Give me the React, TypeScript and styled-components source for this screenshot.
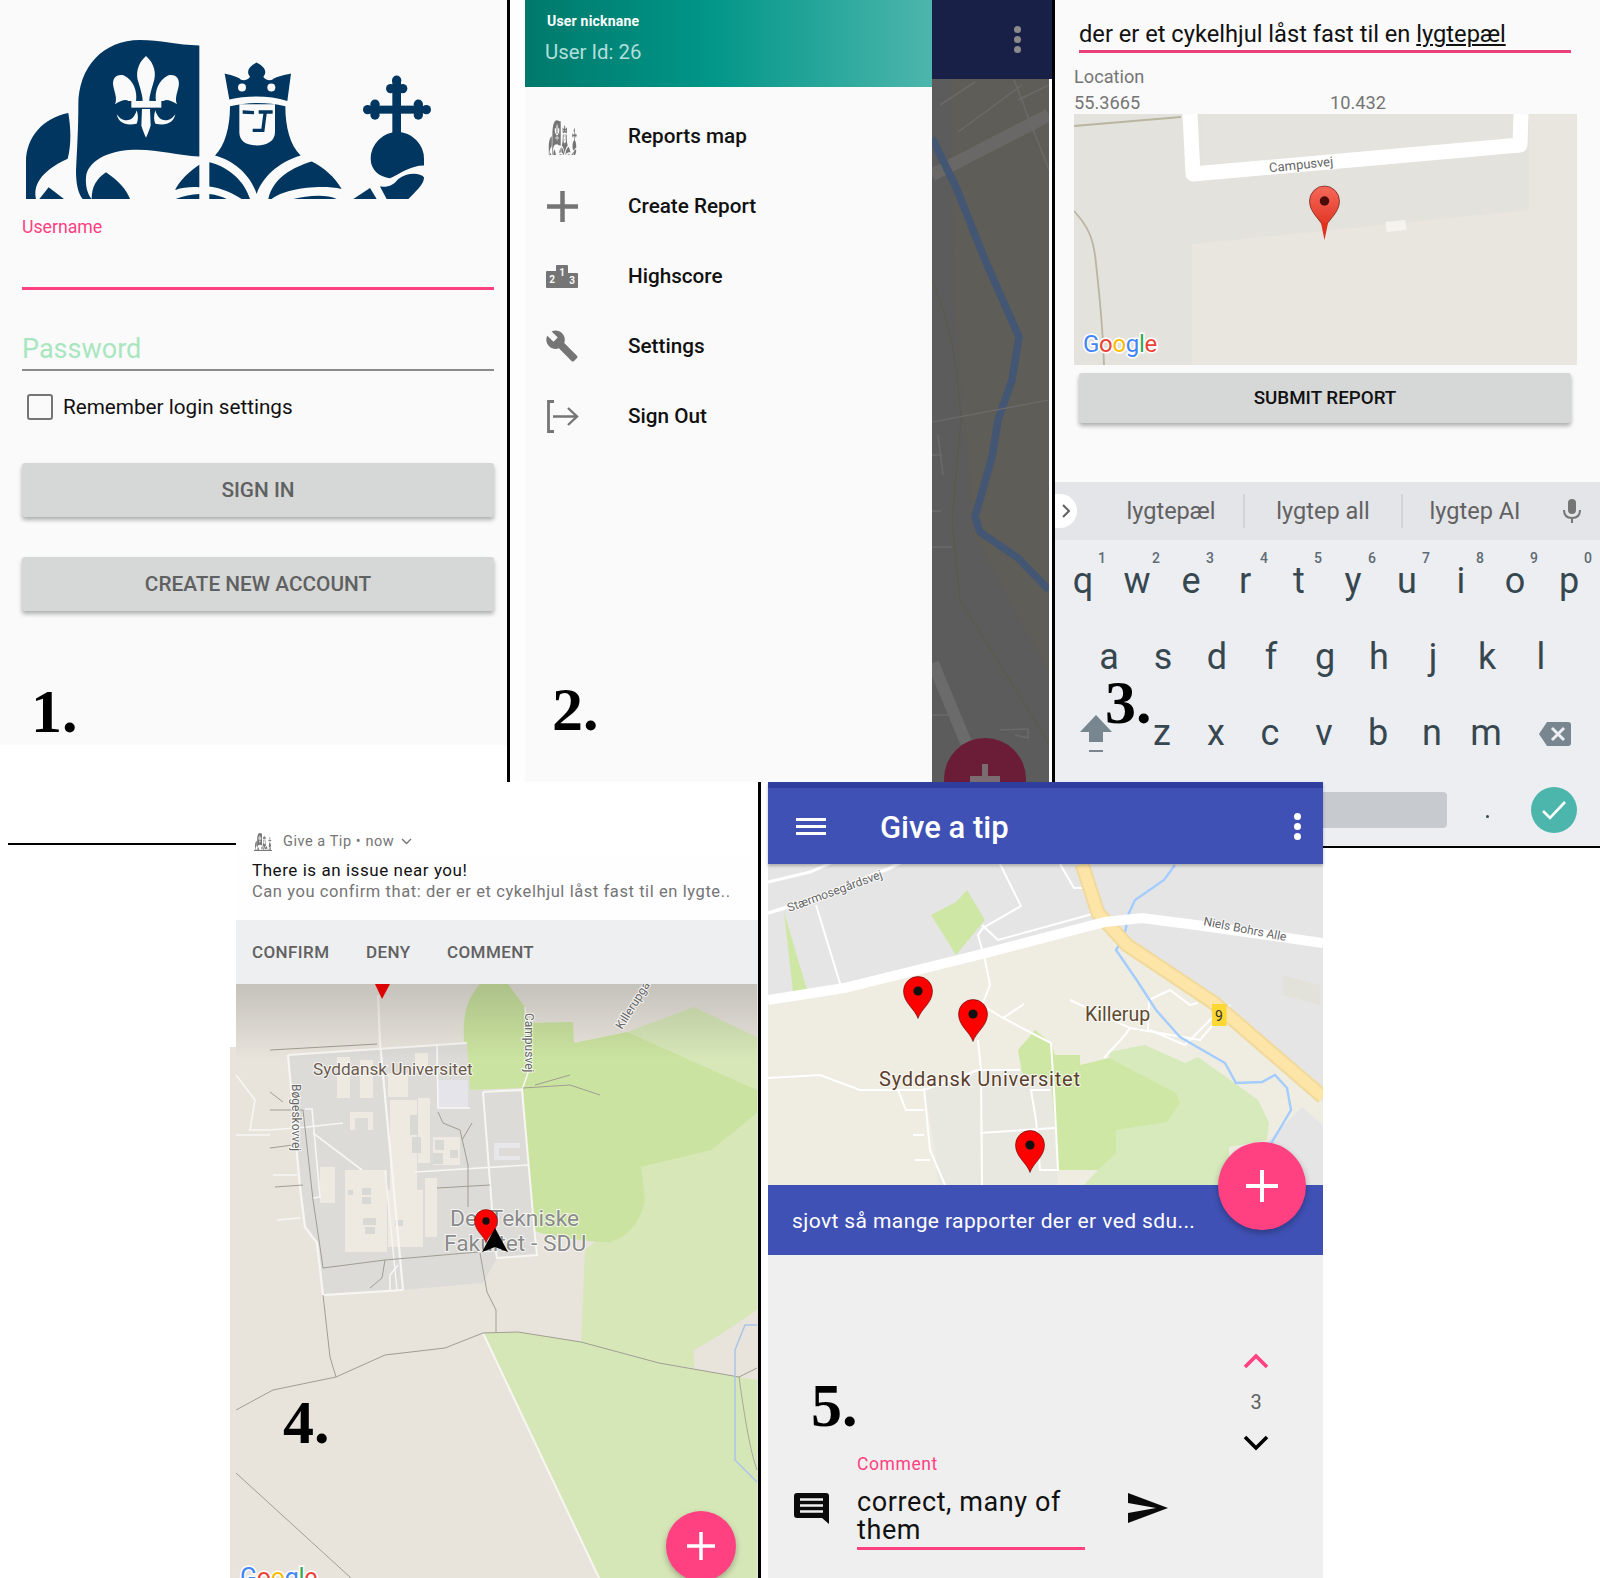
import { FC } from 'react'
import styled, { createGlobalStyle } from 'styled-components'

const GlobalStyle = createGlobalStyle`
  html, body {
    margin: 0;
    padding: 0;
    background: #fff;
    font-family: Roboto, "Liberation Sans", sans-serif;
  }
  svg text {
    font-family: Roboto, "Liberation Sans", sans-serif;
  }
`

const PINK = '#ff4081'
const INDIGO = '#3f51b5'
const ICON_GREY = '#757575'

const Page = styled.div`
  width: 1600px;
  height: 1578px;
  overflow: hidden;
  position: relative;
`

const TopRow = styled.div`
  display: flex;
  align-items: flex-start;
  height: 782px;
`

const BottomRow = styled.div`
  display: flex;
  align-items: flex-start;
  height: 796px;
  position: relative;
`

const ColumnRule = styled.div`
  width: 3px;
  height: 100%;
  flex: none;
  background: #000;
`

const StepNumber = styled.div<{ $left: number; $top: number }>`
  position: absolute;
  left: ${(p) => p.$left}px;
  top: ${(p) => p.$top}px;
  font-family: 'Liberation Serif', serif;
  font-weight: 700;
  font-size: 62px;
  line-height: 60px;
  color: #000;
  z-index: 3;
`

/* panel 1: login */

const LoginPanel = styled.section`
  width: 507px;
  height: 745px;
  flex: none;
  background: #fafafa;
  position: relative;
`

const LogoBox = styled.div`
  width: 450px;
  height: 180px;
  padding-top: 30px;
  svg {
    display: block;
  }
`

const FloatLabel = styled.div`
  margin: 7px 0 0 22px;
  font-size: 17.7px;
  line-height: 20px;
  color: ${PINK};
`

const Underline = styled.div<{ $top: number; $active?: boolean }>`
  margin: ${(p) => p.$top}px 0 0 22px;
  width: 472px;
  height: ${(p) => (p.$active ? 3 : 2)}px;
  background: ${(p) => (p.$active ? PINK : '#8a8a8a')};
`

const Placeholder = styled.div`
  margin: 42px 0 0 22px;
  font-size: 27px;
  line-height: 34px;
  color: #a8e6bf;
`

const CheckRow = styled.label`
  display: flex;
  align-items: center;
  margin: 23px 0 0 27px;
  font-size: 20.7px;
  color: #111;
`

const CheckBox = styled.span`
  width: 22px;
  height: 22px;
  border: 2px solid #757575;
  border-radius: 3px;
  margin-right: 10px;
`

const RaisedButton = styled.div<{ $top: number; $dark?: boolean }>`
  display: flex;
  align-items: center;
  justify-content: center;
  margin: ${(p) => p.$top}px 0 0 ${(p) => (p.$dark ? 24 : 22)}px;
  width: ${(p) => (p.$dark ? 492 : 472)}px;
  height: ${(p) => (p.$dark ? 50 : 54)}px;
  background: #d6d7d7;
  border-radius: 3px;
  box-shadow: 0 3px 4px rgba(0, 0, 0, 0.3);
  font-size: ${(p) => (p.$dark ? 18.8 : 20.8)}px;
  font-weight: 500;
  color: ${(p) => (p.$dark ? '#111' : '#5f6161')};
`

/* panel 2: drawer */

const DrawerGutter = styled.div`
  width: 15px;
  height: 782px;
  flex: none;
  background: #fefefe;
`

const Drawer = styled.aside`
  width: 407px;
  height: 782px;
  flex: none;
  background: #fafafa;
`

const DrawerHeader = styled.header`
  height: 87px;
  box-sizing: border-box;
  padding: 13px 0 0 20px;
  background: linear-gradient(90deg, #00796b 0%, #009688 45%, #4db6ac 100%);
`

const Nickname = styled.div`
  margin-left: 2px;
  font-size: 14px;
  line-height: 16px;
  letter-spacing: 0.2px;
  font-weight: 700;
  color: #fff;
`

const UserId = styled.div`
  margin-top: 10px;
  font-size: 20.4px;
  line-height: 26px;
  color: #b2dfdb;
`

const DrawerMenu = styled.nav`
  padding-top: 14px;
`

const DrawerItem = styled.div`
  display: flex;
  align-items: center;
  height: 70px;
  padding-left: 20px;
  font-size: 20.7px;
  font-weight: 500;
  color: #111;
`

const DrawerIcon = styled.span`
  display: flex;
  align-items: center;
  justify-content: center;
  width: 34px;
  margin-right: 49px;
`

const ScrimColumn = styled.div`
  width: 120px;
  height: 782px;
  flex: none;
  position: relative;
  overflow: hidden;
  background: #5f5e59;
`

const ScrimBar = styled.div`
  display: flex;
  align-items: center;
  justify-content: flex-end;
  height: 79px;
  padding-right: 31px;
  background: #182048;
`

const KebabDot = styled.i<{ $color: string }>`
  display: block;
  width: 7px;
  height: 7px;
  border-radius: 50%;
  background: ${(p) => p.$color};
  margin: 1.5px 0;
`

const Kebab = styled.div`
  display: flex;
  flex-direction: column;
`

const DimFab = styled.div`
  position: absolute;
  left: 12px;
  top: 738px;
  width: 82px;
  height: 82px;
  display: flex;
  align-items: center;
  justify-content: center;
  border-radius: 50%;
  background: #6b1d38;
`

/* panel 3: report form + keyboard */

const ReportPanel = styled.section`
  width: 545px;
  height: 848px;
  flex: none;
  box-sizing: border-box;
  background: #fafafa;
  position: relative;
  border-bottom: 2px solid #000;
`

const ReportField = styled.div`
  margin-left: 24px;
  width: 492px;
  height: 50px;
  box-sizing: border-box;
  padding: 19px 0 0;
  font-size: 23.66px;
  line-height: 31px;
  color: #111;
  white-space: nowrap;
  u {
    text-decoration-thickness: 1.5px;
    text-underline-offset: 2px;
  }
`

const FieldLine = styled.div`
  margin-left: 24px;
  width: 492px;
  height: 3px;
  background: #ec407a;
`

const LocationLabel = styled.div`
  margin: 12px 0 0 19px;
  font-size: 18.2px;
  line-height: 24px;
  color: #757575;
`

const CoordRow = styled.div`
  display: flex;
  margin: 2px 0 -1px 19px;
  font-size: 18.2px;
  line-height: 24px;
  color: #757575;
  span {
    width: 256px;
  }
`

const MapFrame = styled.div`
  margin-left: 19px;
  height: 251px;
  width: 503px;
  overflow: hidden;
  svg {
    display: block;
  }
`

const Keyboard = styled.div`
  position: absolute;
  left: 0;
  right: 0;
  top: 482px;
  bottom: 0;
  background: #eceef2;
`

const Suggestions = styled.div`
  display: flex;
  align-items: center;
  height: 58px;
  background: #e4e5e9;
  position: relative;
  font-size: 23.5px;
  color: #616161;
`

const ExpandTab = styled.div`
  display: flex;
  align-items: center;
  justify-content: center;
  width: 22px;
  height: 34px;
  background: #fff;
  border-radius: 0 17px 17px 0;
`

const Suggestion = styled.div<{ $width: number; $pad?: number; $rule?: boolean }>`
  width: ${(p) => p.$width}px;
  height: 34px;
  line-height: 34px;
  text-align: center;
  box-sizing: border-box;
  padding-left: ${(p) => p.$pad ?? 0}px;
  border-right: ${(p) => (p.$rule ? '2px solid #d2d4d8' : 'none')};
`

const KeySpacer = styled.div`
  height: 4px;
`

const KeyRow = styled.div<{ $indent?: number }>`
  display: flex;
  height: 76px;
  padding-left: ${(p) => (p.$indent ?? 0) + 1}px;
`

const Key = styled.div`
  width: 54px;
  height: 76px;
  position: relative;
  text-align: center;
  font-size: 36px;
  line-height: 75px;
  color: #37474f;
`

const KeyHint = styled.span`
  position: absolute;
  right: 4px;
  top: 6px;
  font-size: 14px;
  line-height: 16px;
  font-weight: 500;
  color: #5f6b73;
`

const SideKey = styled.div<{ $width: number }>`
  display: flex;
  align-items: center;
  justify-content: center;
  width: ${(p) => p.$width}px;
`

const KeyboardFoot = styled.div`
  display: flex;
  align-items: center;
  height: 46px;
  margin-top: 15px;
  padding: 0 23px 0 0;
`

const SpaceBar = styled.div`
  flex: 1;
  height: 36px;
  border-radius: 4px;
  background: #c7cbd0;
`

const DotKey = styled.div`
  width: 80px;
  margin-right: 4px;
  display: flex;
  justify-content: center;
  padding-top: 12px;
  &::after {
    content: '';
    width: 3px;
    height: 3px;
    border-radius: 50%;
    background: #37474f;
  }
`

const CheckKey = styled.div`
  display: flex;
  align-items: center;
  justify-content: center;
  width: 46px;
  height: 46px;
  border-radius: 50%;
  background: #4db6ac;
`

/* panel 4: notification over map */

const StrayRule = styled.div`
  width: 228px;
  height: 2px;
  margin: 61px 0 0 8px;
  flex: none;
  background: #000;
`

const NotifyPanel = styled.section`
  width: 522px;
  height: 100%;
  flex: none;
  position: relative;
`

const NotifyBody = styled.div`
  height: 138px;
  box-sizing: border-box;
  padding: 49px 0 0 16px;
  background: linear-gradient(#fff 30%, #fefdff 100%);
`

const NotifyHead = styled.div`
  display: flex;
  align-items: center;
  height: 20px;
  font-size: 14.5px;
  letter-spacing: 0.55px;
  color: #757575;
`

const NotifyBadge = styled.span`
  display: block;
  margin: 0 11px 0 2px;
  border-bottom: 1.5px solid #757575;
  svg {
    display: block;
  }
`

const NotifyCaret = styled.svg`
  margin-left: 7px;
`

const NotifyTitle = styled.div`
  margin-top: 9px;
  font-size: 17px;
  line-height: 20px;
  letter-spacing: 0.55px;
  color: #111;
`

const NotifyText = styled.div`
  margin-top: 2px;
  font-size: 16.5px;
  line-height: 20px;
  letter-spacing: 0.58px;
  color: #757575;
  white-space: nowrap;
`

const NotifyActions = styled.div`
  display: flex;
  align-items: center;
  height: 64px;
  padding-left: 16px;
  background: #eeeff1;
  font-size: 17px;
  font-weight: 500;
  letter-spacing: 0.4px;
  color: #616161;
`

const NotifyAction = styled.span<{ $width: number }>`
  width: ${(p) => p.$width}px;
`

const MapOverhang = styled.div`
  margin-left: -6px;
  svg {
    display: block;
  }
`

const Fab = styled.div<{ $left: number; $top: number; $size: number }>`
  position: absolute;
  left: ${(p) => p.$left}px;
  top: ${(p) => p.$top}px;
  width: ${(p) => p.$size}px;
  height: ${(p) => p.$size}px;
  display: flex;
  align-items: center;
  justify-content: center;
  border-radius: 50%;
  background: ${PINK};
  box-shadow: 0 3px 6px rgba(0, 0, 0, 0.28);
  z-index: 2;
`

/* panel 5: tip detail */

const TipGutter = styled.div`
  width: 7px;
  flex: none;
`

const TipPanel = styled.section`
  width: 555px;
  height: 100%;
  flex: none;
  position: relative;
  background: #efefef;
  display: flex;
  flex-direction: column;
`

const AppBar = styled.header`
  display: flex;
  align-items: center;
  height: 76px;
  flex: none;
  padding-left: 28px;
  padding-right: 22px;
  border-top: 6px solid #303f9f;
  background: ${INDIGO};
  box-shadow: 0 2px 3px rgba(0, 0, 0, 0.25);
  position: relative;
  color: #fff;
`

const MenuLines = styled.div`
  width: 30px;
  height: 17px;
  border-top: 3px solid #fff;
  border-bottom: 3px solid #fff;
  position: relative;
  margin-right: 55px;
  box-sizing: border-box;
  &::after {
    content: '';
    position: absolute;
    left: 0;
    right: 0;
    top: 4px;
    height: 3px;
    background: #fff;
  }
`

const AppTitle = styled.h1`
  flex: 1;
  margin: 2px 0 0;
  font-size: 31px;
  font-weight: 500;
  margin-left: -1px;
`

const TipBar = styled.div`
  height: 70px;
  flex: none;
  box-sizing: border-box;
  padding: 22px 0 0 24px;
  background: ${INDIGO};
  font-size: 21px;
  line-height: 28px;
  letter-spacing: 0.4px;
  color: #fff;
`

const CommentArea = styled.div`
  flex: 1;
  display: flex;
  flex-direction: column;
  padding-top: 98px;
`

const VoteColumn = styled.div`
  display: flex;
  flex-direction: column;
  align-items: center;
  align-self: flex-end;
  width: 40px;
  margin-right: 47px;
  height: 101px;
  font-size: 20px;
  color: #616161;
`

const VoteCount = styled.div`
  height: 66px;
  line-height: 66px;
  flex: none;
`

const CommentRow = styled.div`
  display: flex;
  align-items: flex-start;
`

const CommentIcon = styled.div`
  width: 62px;
  margin: 39px 0 0 26px;
`

const CommentField = styled.div`
  width: 228px;
  margin-left: 1px;
`

const CommentLabel = styled.div`
  font-size: 17.5px;
  line-height: 20px;
  letter-spacing: 0.6px;
  color: ${PINK};
`

const CommentText = styled.div`
  margin-top: 14px;
  padding-bottom: 3px;
  border-bottom: 3px solid ${PINK};
  font-size: 27px;
  line-height: 28px;
  letter-spacing: 0.6px;
  color: #111;
`

const SendIcon = styled.div`
  margin: 39px 0 0 43px;
`

/* drawings */

const Logo: FC<{ width: number; height: number; ink: string; paper: string }> = ({
  width,
  height,
  ink,
  paper,
}) => {
  const lobes = [
    [1190, 150],
    [1172, 175],
    [1208, 175],
    [1125, 222],
    [1125, 254],
    [1103, 238],
    [1255, 222],
    [1255, 254],
    [1279, 238],
  ]
  return (
    <svg width={width} height={height} viewBox="0 0 1350 505" preserveAspectRatio="none">
      <g fill={ink}>
        <path d="M205 248C130 262 78 320 78 395L78 505L108 505C100 470 115 425 203 385C215 340 212 290 205 248Z" />
        <path d="M118 505L146 470L192 505Z" />
        <path d="M598 46C530 45 480 30 420 30C310 30 235 110 235 225C235 290 232 340 228 420C228 460 234 488 248 505L275 505C262 490 256 465 258 440C262 395 320 360 400 358C470 355 530 375 598 378Z" />
        <path d="M275 505C275 465 290 445 318 425C355 450 378 475 390 505Z" />
        <path d="M674 130C695 135 715 140 722 148C730 152 745 150 750 140C738 125 745 110 770 97C795 110 802 125 790 140C795 150 810 152 818 148C825 140 850 135 873 130L862 212C810 195 740 195 688 208Z" />
        <path d="M690 228C690 290 675 345 645 375C700 390 750 430 770 490C790 430 850 390 902 375C870 345 856 290 856 228C800 215 745 215 690 228Z" />
        <path d="M598 403C565 425 540 450 525 478C550 470 575 468 598 470Z" />
        <path d="M527 505C550 495 575 492 598 490L598 505Z" />
        <path d="M628 395C690 410 735 455 750 505L725 505C700 490 665 472 628 468Z" />
        <path d="M628 490C650 492 665 498 680 505L628 505Z" />
        <path d="M935 393C880 410 820 440 805 505L815 505C850 475 960 460 1025 475C1005 440 970 410 935 393Z" />
        <path d="M880 505C920 495 980 490 1010 505Z" />
        <rect x="1177" y="150" width="26" height="165" />
        <rect x="1110" y="226" width="160" height="24" />
        {lobes.map(([cx, cy]) => (
          <circle key={`${cx}-${cy}`} cx={cx} cy={cy} r="14" />
        ))}
        <path d="M1192 305A80 80 0 0 1 1272 385L1272 405C1230 405 1200 430 1170 443C1140 440 1112 420 1112 385A80 80 0 0 1 1192 305Z" />
        <path d="M1140 468C1170 470 1180 462 1195 445C1220 425 1260 425 1272 440C1272 455 1262 468 1240 490L1225 505L1160 505Z" />
        <path d="M1060 505L1110 472L1130 505Z" />
      </g>
      <g fill={paper}>
        <path d="M438 78C412 100 406 132 416 158C424 185 428 200 428 212L448 212C448 200 452 185 460 158C470 132 464 100 438 78Z" />
        <path d="M408 212C413 185 400 148 372 136C350 130 335 145 340 168C345 190 352 205 345 222C360 212 378 205 385 212Z" />
        <path d="M468 212C463 185 476 148 504 136C526 130 541 145 536 168C531 190 524 205 531 222C516 212 498 205 491 212Z" />
        <rect x="394" y="212" width="90" height="20" />
        <path d="M426 236L450 236L452 285C448 300 442 312 438 322C434 312 428 300 424 285Z" />
        <path d="M350 252C355 275 375 288 410 280C415 270 415 255 410 240C405 258 395 270 380 270C365 270 358 262 350 252Z" />
        <path d="M526 252C521 275 501 288 466 280C461 270 461 255 466 240C471 258 481 270 496 270C511 270 518 262 526 252Z" />
        <circle cx="726" cy="172" r="12" />
        <circle cx="814" cy="172" r="12" />
        <path d="M718 222L825 222L825 305C825 330 805 345 770 345C735 345 718 330 718 305Z" />
      </g>
      <path
        fill={ink}
        d="M728 240L762 242L762 252L728 250ZM776 240L818 240L818 250L800 250L793 305L758 305L758 295L784 295L790 250L776 250Z"
      />
    </svg>
  )
}

const PlusIcon: FC<{ size: number; weight: number; color: string }> = ({ size, weight, color }) => (
  <svg width={size} height={size} viewBox={`0 0 ${size} ${size}`}>
    <rect x={(size - weight) / 2} width={weight} height={size} fill={color} />
    <rect y={(size - weight) / 2} width={size} height={weight} fill={color} />
  </svg>
)

const PodiumIcon = () => (
  <svg width="32" height="24" viewBox="0 0 32 24">
    <path
      d="M0 8a1 1 0 0 1 1-1h9V2a1 1 0 0 1 1-1h10a1 1 0 0 1 1 1v7h9a1 1 0 0 1 1 1v13a1 1 0 0 1-1 1H1a1 1 0 0 1-1-1Z"
      fill={ICON_GREY}
    />
    <g fill="#fafafa" fontSize="10" fontWeight="700" textAnchor="middle">
      <text x="6" y="19">2</text>
      <text x="16" y="12">1</text>
      <text x="26" y="20">3</text>
    </g>
  </svg>
)

const WrenchIcon = () => (
  <svg width="36" height="36" viewBox="0 0 24 24">
    <path
      fill={ICON_GREY}
      d="M22.7 19l-9.1-9.1c.9-2.3.4-5-1.5-6.9-2-2-5-2.4-7.4-1.3L9 6 6 9 1.6 4.7C.4 7.1.9 10.1 2.9 12.1c1.9 1.9 4.6 2.4 6.9 1.5l9.1 9.1c.4.4 1 .4 1.4 0l2.3-2.3c.5-.4.5-1.1.1-1.4z"
    />
  </svg>
)

const SignOutIcon = () => (
  <svg width="33" height="33" viewBox="0 0 33 33" fill="none" stroke={ICON_GREY}>
    <path d="M8 1.5H2.5V31.5H8" strokeWidth="2.8" />
    <path d="M7 16.5H31M22 8L31 16.5L22 25" strokeWidth="2.4" />
  </svg>
)

const ChevronIcon: FC<{ up?: boolean; color: string }> = ({ up, color }) => (
  <svg width="26" height="16" viewBox="0 0 26 16" fill="none" style={{ flex: 'none' }}>
    <path
      d={up ? 'M2 14L13 3L24 14' : 'M2 2L13 13L24 2'}
      stroke={color}
      strokeWidth="3.6"
    />
  </svg>
)

const Balloon = () => (
  <svg width="35" height="31" viewBox="0 0 35 31">
    <path
      d="M3 0H32a3 3 0 0 1 3 3V31L28 25H3a3 3 0 0 1-3-3V3a3 3 0 0 1 3-3Z"
      fill="#0a0a0a"
    />
    <path d="M6 6.5H29M6 12.5H29M6 18.5H29" stroke="#efefef" strokeWidth="2.6" />
  </svg>
)

const SendArrow = () => (
  <svg width="40" height="30" viewBox="0 0 40 30">
    <path d="M0 0L40 15L0 30V20L28 15L0 10Z" fill="#0a0a0a" />
  </svg>
)

const MapText = styled.text<{ $size: number; $color: string; $weight?: number }>`
  font-size: ${(p) => p.$size}px;
  font-weight: ${(p) => p.$weight ?? 400};
  fill: ${(p) => p.$color};
  stroke: rgba(255, 255, 255, 0.75);
  stroke-width: 2px;
  paint-order: stroke;
`

const GoogleMark: FC<{ x: number; y: number; size: number }> = ({ x, y, size }) => (
  <text
    x={x}
    y={y}
    fontSize={size}
    stroke="#fff"
    strokeWidth="3"
    paintOrder="stroke"
    style={{ letterSpacing: '-0.3px' }}
  >
    <tspan fill="#4285f4">G</tspan>
    <tspan fill="#ea4335">o</tspan>
    <tspan fill="#fbbc05">o</tspan>
    <tspan fill="#4285f4">g</tspan>
    <tspan fill="#34a853">l</tspan>
    <tspan fill="#ea4335">e</tspan>
  </text>
)

const RedPin: FC<{ cx: number; cy: number; r?: number; fill?: string; dot?: string }> = ({
  cx,
  cy,
  r = 14.5,
  fill = '#f00',
  dot = '#111',
}) => (
  <g transform={`translate(${cx} ${cy}) scale(${r / 14.5})`}>
    <path
      d="M-14.5 0C-14.5 12-3 18 0 27.5C3 18 14.5 12 14.5 0A14.5 14.5 0 0 0-14.5 0Z"
      fill={fill}
      stroke="rgba(60,0,0,0.65)"
      strokeWidth="0.8"
    />
    <circle r="4.6" fill={dot} />
  </g>
)

const DrawerMap = () => (
  <svg width="120" height="703" viewBox="932 79 120 703" style={{ display: 'block' }}>
    <rect x="932" y="79" width="120" height="703" fill="#5c5c5c" />
    <path d="M950 79H1049V673L975 535L963 420L955 300Z" fill="#5f5d57" />
    <path d="M932 175L1049 115" stroke="#696866" strokeWidth="13" />
    <path d="M940 105L975 82M958 132L1022 85M1014 80L1022 100C1030 125 1040 145 1049 170M1018 100L1049 85" stroke="#6b6a68" strokeWidth="1.5" fill="none" />
    <path
      d="M932 138L956 187L985 260L1019 337L1012 380L998 420L992 457L975 517L980 532L1018 558L1049 590"
      stroke="#435673"
      strokeWidth="7.5"
      strokeLinejoin="round"
      fill="none"
    />
    <path d="M932 280C945 310 955 350 958 385L961 420L952 520L960 600L1047 740L1049 745" stroke="#5a5a48" strokeWidth="1" fill="none" />
    <path d="M932 422L1049 400" stroke="#6e6d6b" strokeWidth="1.2" />
    <path d="M933 663L967 745" stroke="#6b6b6b" strokeWidth="12" />
    <path d="M938 435L943 475M932 455H942M932 511H941M932 547H952M1000 730L1028 729V738L1015 735M932 715L950 715" stroke="#6b6a68" strokeWidth="1.5" fill="none" />
    <rect x="1049" y="79" width="3" height="703" fill="#fff" />
  </svg>
)

const ReportMap = () => (
  <svg width="503" height="251" viewBox="0 0 503 251">
    <rect width="503" height="251" fill="#e9e5df" />
    <path d="M0 0H455V96L118 130V251H0Z" fill="#e4e2dd" />
    <path d="M128 0H438V24L128 52Z" fill="#e5e3de" />
    <path
      d="M116 0L119 60L446 31L447 0"
      stroke="#fff"
      strokeWidth="15"
      fill="none"
      strokeLinejoin="round"
    />
    <path d="M0 12L107 3" stroke="#b9b5a0" strokeWidth="2" />
    <path d="M0 97C14 112 20 125 22 150C26 185 29 220 30 251" stroke="#b9b5a0" strokeWidth="1.8" fill="none" />
    <rect x="312" y="107" width="20" height="10" fill="#f5f3ee" transform="rotate(-6 322 112)" />
    <MapText x="195" y="55" $size={13} $color="#666" transform="rotate(-6 227 51)">
      Campusvej
    </MapText>
    <defs>
      <linearGradient id="pinfill" x1="0" y1="0" x2="0" y2="1">
        <stop offset="0" stopColor="#f5695a" />
        <stop offset="1" stopColor="#e0301e" />
      </linearGradient>
    </defs>
    <RedPin cx={250.5} cy={87} r={15} fill="url(#pinfill)" dot="#4a0d0a" />
    <path d="M247 109L250.5 126L254 109Z" fill="#e0301e" />
    <GoogleMark x={9} y={238} size={24} />
  </svg>
)

const campusBuildings = [
  [337, 1057, 13, 41],
  [360, 1060, 13, 38],
  [388, 1073, 20, 24],
  [415, 1053, 13, 20],
  [390, 1100, 27, 147],
  [418, 1098, 12, 65],
  [433, 1137, 27, 28],
  [350, 1112, 23, 6],
  [350, 1112, 5, 18],
  [368, 1112, 5, 18],
  [345, 1170, 42, 82],
  [320, 1167, 15, 36],
  [388, 1190, 35, 57],
  [425, 1178, 12, 59],
]

const campusHoles = [
  [362, 1188, 9, 7],
  [362, 1197, 9, 7],
  [363, 1218, 13, 7],
  [365, 1227, 10, 7],
  [410, 1115, 8, 20],
  [412, 1137, 9, 16],
  [433, 1153, 10, 11],
  [435, 1140, 9, 10],
  [450, 1150, 8, 8],
  [348, 1190, 5, 5],
  [395, 1220, 8, 6],
]

const CampusMap = () => (
  <svg width="528" height="594" viewBox="230 984 528 594">
    <rect x="230" y="984" width="528" height="594" fill="#e8e4dc" />
    <path d="M627 1032L694 1007L757 1037V1310L720 1335L694 1350V1368L659 1363L581 1342L585 1250L645 1200L640 1167Z" fill="#d7e7b8" />
    <path d="M480 984H508L525 1007L529 1023L573 1022L574 1043L627 1032L757 1090V1113L711 1150L641 1167L645 1200C640 1230 615 1245 602 1242C570 1240 545 1235 532 1230L523 1088L470 1090L464 1040C462 1010 470 995 480 984Z" fill="#cbe3a0" />
    <path d="M483 1333L518 1332L581 1342L659 1363L739 1377L757 1380V1578H599Z" fill="#d6e7b7" />
    <path d="M288 1055L467 1043L470 1090L522 1090L535 1237L537 1255L497 1258L483 1283L403 1290L323 1295L317 1243L305 1227L300 1187Z" fill="#dcdbd8" />
    <g fill="#eeeae1">
      {campusBuildings.map(([x, y, w, h]) => (
        <rect key={`${x}-${y}`} x={x} y={y} width={w} height={h} />
      ))}
    </g>
    <g fill="#d8d8d5">
      {campusHoles.map(([x, y, w, h]) => (
        <rect key={`${x}-${y}`} x={x} y={y} width={w} height={h} />
      ))}
    </g>
    <rect x="438" y="1080" width="30" height="28" fill="#e4e4ea" />
    <path d="M494 1143H520V1148H499V1156H520V1160H494Z" fill="#e8e8ea" />
    <g stroke="#f7f6f3" strokeWidth="1.6" fill="none">
      <path d="M378 995L380 1043L392 1170L403 1290" strokeWidth="2.2" />
      <path d="M385 1170L397 1290" strokeWidth="1.4" />
      <path d="M288 1055L467 1043" strokeWidth="2" />
      <path d="M288 1055L300 1187L305 1227L317 1243L323 1295L403 1290" strokeWidth="2.2" />
      <path d="M437 1045L438 1108H470" />
      <path d="M483 1092L522 1090L535 1237L537 1255L497 1258L495 1247L483 1092" strokeWidth="2" />
      <path d="M415 1172L528 1165" />
      <path d="M305 1109H312L320 1197L313 1198" />
      <path d="M270 1130L307 1127L343 1123M313 1133L362 1170" />
      <path d="M273 1175H297M277 1220L300 1218" />
      <path d="M236 1075L255 1100L250 1130L270 1130M236 1135L270 1135" />
      <path d="M390 1290V1275L398 1265" />
      <path d="M483 1333L599 1578" strokeWidth="2" />
      <path d="M525 1007L529 1070L522 1090" />
    </g>
    <g stroke="#a09e92" strokeWidth="1" fill="none">
      <path d="M236 1410L273 1390L336 1377L385 1355L445 1348L483 1333L518 1332L581 1342L659 1363L739 1377L757 1368" />
      <path d="M323 1295L330 1357L336 1377" />
      <path d="M480 1253L487 1292L496 1310V1332" />
      <path d="M236 1473L351 1578" />
      <path d="M270 1050L377 1044" />
      <path d="M303 1110L313 1200L320 1247L323 1268L385 1260L478 1252" />
      <path d="M385 1260L382 1278L370 1288" />
      <path d="M438 1112L443 1123L460 1130L468 1165V1207M472 1123L462 1140" />
      <path d="M437 1188L490 1185M270 1110H303M270 1148L293 1145M275 1187L303 1185M270 1092L283 1102" />
      <path d="M523 1088L570 1085L600 1095M535 1085L570 1075" />
    </g>
    <path d="M757 1325H745L735 1350V1460L757 1482" stroke="#a9c6e8" strokeWidth="1.5" fill="none" />
    <path d="M739 1377C745 1420 750 1450 757 1470" stroke="#a8a69a" fill="none" />
    <path d="M236 984H757V1060H236Z" fill="url(#notifyshade)" />
    <defs>
      <linearGradient id="notifyshade" x1="0" y1="0" x2="0" y2="1">
        <stop offset="0" stopColor="#000" stopOpacity="0.15" />
        <stop offset="1" stopColor="#000" stopOpacity="0" />
      </linearGradient>
    </defs>
    <rect x="230" y="984" width="6" height="63" fill="#fff" />
    <path d="M375 984H390L382 999Z" fill="#d00" />
    <MapText x="313" y="1075" $size={17.2} $color="#6b5b4d">
      Syddansk Universitet
    </MapText>
    <MapText x="519" y="1013" $size={12} $color="#666" transform="rotate(90 519 1013)" textAnchor="start" dy="-6">
      Campusvej
    </MapText>
    <MapText x="622" y="1030" $size={12} $color="#666" transform="rotate(-58 622 1030)">
      Killerupgade
    </MapText>
    <MapText x="296" y="1084" $size={12} $color="#666" transform="rotate(90 296 1084)" dy="4">
      Bøgeskovvej
    </MapText>
    <MapText x="450" y="1226" $size={22.8} $color="#8a8a8a">
      Det Tekniske
    </MapText>
    <MapText x="444" y="1251" $size={22.8} $color="#8a8a8a">
      Fakultet - SDU
    </MapText>
    <RedPin cx={486} cy={1221} r={11.5} />
    <path d="M495 1228L482 1252L495 1247L508 1252Z" fill="#000" />
    <GoogleMark x={240} y={1586} size={25} />
  </svg>
)

const TipMap = () => (
  <svg width="555" height="321" viewBox="768 864 555 321" style={{ display: 'block' }}>
    <rect x="768" y="864" width="555" height="321" fill="#e5e5e5" />
    <path d="M768 1003L844 990L978 957L1105 925L1127 945L1214 1012L1323 1102V1185H768Z" fill="#efece2" />
    <path d="M1302 1107L1323 1125V1185H1262L1262 1147Z" fill="#e5e5e5" />
    <path d="M784 912L807 990L793 992Z" fill="#cfe7a5" />
    <path d="M931 915L956 902L967 890L985 920L956 955Z" fill="#cfe7a5" />
    <path d="M924 1088L978 1072L1051 1068L1058 1185H938L934 1145Z" fill="#e8e8e0" />
    <path d="M1109 1052L1145 1045L1185 1063L1198 1057L1258 1100L1269 1123L1267 1140L1229 1147L1229 1185H1084L1098 1170L1116 1130Z" fill="#d6eabc" />
    <path d="M1018 1050L1035 1030L1051 1043L1055 1055L1080 1055L1080 1065L1109 1058L1176 1093L1180 1103L1167 1122L1116 1130L1116 1153L1098 1170H1058L1051 1080L1022 1073Z" fill="#cfe7a5" />
    <g stroke="#fff" strokeWidth="2" fill="none">
      <path d="M768 882L810 872L860 850" strokeWidth="3" />
      <path d="M768 913L810 900L890 868L905 860" strokeWidth="3.5" />
      <path d="M816 905L842 990" />
      <path d="M1000 864L1021 906L983 928L978 935L985 960L990 985L982 1005L1003 1018L1051 1043L1054 1090L1058 1170H1040L1036 1120L1031 1090H1050" />
      <path d="M1060 864L1074 888H1090L1096 913L998 940L982 925" />
      <path d="M1003 1018L1024 1004" />
      <path d="M978 1040L981 1070L982 1185" />
      <path d="M768 1078L820 1075L860 1090L898 1090L906 1110H924" />
      <path d="M898 1090H924L978 1070H1020" />
      <path d="M924 1088L930 1150L945 1185" />
      <path d="M913 1135H924M915 1160H930" />
      <path d="M980 1133L1055 1128" />
      <path d="M1070 1000L1130 1028L1125 1035L1104 1058M1130 1028L1200 1040L1230 1005" />
      <path d="M1148 1030L1149 1000L1170 990L1190 1005L1198 1003M1150 1030L1185 1045L1215 1015" />
    </g>
    <path d="M1175 865L1164 880L1135 900L1129 913L1124 937L1116 950L1138 982L1156 1010L1180 1037L1225 1063L1236 1083L1262 1082L1275 1075L1287 1088L1291 1110L1269 1147" stroke="#a3ccff" strokeWidth="2.4" fill="none" />
    <path d="M1082 864L1098 913L1127 945L1214 1003L1323 1097" stroke="#f0d99a" strokeWidth="15" fill="none" />
    <path d="M1082 864L1098 913L1127 945L1214 1003L1323 1097" stroke="#fde4a7" strokeWidth="11" fill="none" />
    <path d="M768 1000L844 988L978 955L1105 922L1142 918L1196 925L1323 943" stroke="#fff" strokeWidth="10" fill="none" />
    <path d="M1283 975L1320 985V1005L1283 995Z" fill="#e2e2da" />
    <MapText x="789" y="912" $size={12} $color="#666" transform="rotate(-20 789 912)">
      Stærmosegårdsvej
    </MapText>
    <MapText x="1203" y="925" $size={12} $color="#666" transform="rotate(11 1203 925)">
      Niels Bohrs Alle
    </MapText>
    <MapText x="1085" y="1021" $size={19.5} $color="#5b4a2f">
      Killerup
    </MapText>
    <MapText x="879" y="1086" $size={20} $color="#5a3e2b" style={{ letterSpacing: '0.8px' }}>
      Syddansk Universitet
    </MapText>
    <rect x="1212" y="1004" width="14.5" height="22" fill="#fdd835" />
    <text x="1219" y="1021" fontSize="14" textAnchor="middle" fill="#333">
      9
    </text>
    <RedPin cx={918} cy={991} />
    <RedPin cx={973} cy={1014} />
    <RedPin cx={1030} cy={1145} />
  </svg>
)

const topKeys: [string, string][] = [
  ['q', '1'],
  ['w', '2'],
  ['e', '3'],
  ['r', '4'],
  ['t', '5'],
  ['y', '6'],
  ['u', '7'],
  ['i', '8'],
  ['o', '9'],
  ['p', '0'],
]

const drawerEntries = [
  { label: 'Reports map', icon: <Logo width={31} height={37} ink={ICON_GREY} paper="#fafafa" /> },
  { label: 'Create Report', icon: <PlusIcon size={31} weight={4.5} color={ICON_GREY} /> },
  { label: 'Highscore', icon: <PodiumIcon /> },
  { label: 'Settings', icon: <WrenchIcon /> },
  { label: 'Sign Out', icon: <SignOutIcon /> },
]

export default function App() {
  return (
    <Page>
      <GlobalStyle />
      <TopRow>
        <LoginPanel>
          <LogoBox>
            <Logo width={450} height={169} ink="#00365f" paper="#fafafa" />
          </LogoBox>
          <FloatLabel>Username</FloatLabel>
          <Underline $top={50} $active />
          <Placeholder>Password</Placeholder>
          <Underline $top={3} />
          <CheckRow>
            <CheckBox />
            Remember login settings
          </CheckRow>
          <RaisedButton $top={43}>SIGN IN</RaisedButton>
          <RaisedButton $top={40}>CREATE NEW ACCOUNT</RaisedButton>
          <StepNumber $left={31} $top={681}>1.</StepNumber>
        </LoginPanel>
        <ColumnRule />
        <DrawerGutter />
        <Drawer>
          <DrawerHeader>
            <Nickname>User nicknane</Nickname>
            <UserId>User Id: 26</UserId>
          </DrawerHeader>
          <DrawerMenu>
            {drawerEntries.map((entry) => (
              <DrawerItem key={entry.label}>
                <DrawerIcon>{entry.icon}</DrawerIcon>
                {entry.label}
              </DrawerItem>
            ))}
          </DrawerMenu>
        </Drawer>
        <StepNumber $left={552} $top={679}>2.</StepNumber>
        <ScrimColumn>
          <ScrimBar>
            <Kebab>
              <KebabDot $color="#8a8a8a" />
              <KebabDot $color="#8a8a8a" />
              <KebabDot $color="#8a8a8a" />
            </Kebab>
          </ScrimBar>
          <DrawerMap />
          <DimFab>
            <PlusIcon size={30} weight={6} color="#7b6c72" />
          </DimFab>
        </ScrimColumn>
        <ColumnRule />
        <ReportPanel>
          <ReportField>
            der er et cykelhjul låst fast til en <u>lygtepæl</u>
          </ReportField>
          <FieldLine />
          <LocationLabel>Location</LocationLabel>
          <CoordRow>
            <span>55.3665</span>
            <span>10.432</span>
          </CoordRow>
          <MapFrame>
            <ReportMap />
          </MapFrame>
          <RaisedButton $top={8} $dark>SUBMIT REPORT</RaisedButton>
          <Keyboard>
            <Suggestions>
              <ExpandTab>
                <svg width="10" height="16" viewBox="0 0 10 16" fill="none">
                  <path d="M2 2L8 8L2 14" stroke="#616161" strokeWidth="2" />
                </svg>
              </ExpandTab>
              <Suggestion $width={168} $pad={22} $rule>lygtepæl</Suggestion>
              <Suggestion $width={158} $rule>lygtep all</Suggestion>
              <Suggestion $width={144}>lygtep AI</Suggestion>
              <svg width="20" height="26" viewBox="0 0 20 26" style={{ marginLeft: 15 }}>
                <rect x="6" y="1" width="8" height="15" rx="4" fill="#757575" />
                <path d="M2 12C2 18 6 20 10 20C14 20 18 18 18 12M10 20V25" stroke="#757575" strokeWidth="2" fill="none" />
              </svg>
            </Suggestions>
            <KeySpacer />
            <KeyRow>
              {topKeys.map(([letter, hint]) => (
                <Key key={letter}>
                  {letter}
                  <KeyHint>{hint}</KeyHint>
                </Key>
              ))}
            </KeyRow>
            <KeyRow $indent={26}>
              {'asdfghjkl'.split('').map((letter) => (
                <Key key={letter}>{letter}</Key>
              ))}
            </KeyRow>
            <KeyRow>
              <SideKey $width={79}>
                <svg width="32" height="38" viewBox="0 0 32 38">
                  <path d="M16 0L32 17H23V27H9V17H0Z" fill="#78868f" />
                  <rect x="9" y="35" width="14" height="2" fill="#78868f" />
                </svg>
              </SideKey>
              {'zxcvbnm'.split('').map((letter) => (
                <Key key={letter}>{letter}</Key>
              ))}
              <SideKey $width={84}>
                <svg width="32" height="24" viewBox="0 0 32 24">
                  <path d="M8 0H29a3 3 0 0 1 3 3V21a3 3 0 0 1-3 3H8L0 12Z" fill="#78868f" />
                  <path d="M13 6L25 18M25 6L13 18" stroke="#eceef2" strokeWidth="3" />
                </svg>
              </SideKey>
            </KeyRow>
            <KeyboardFoot>
              <SpaceBar />
              <DotKey />
              <CheckKey>
                <svg width="26" height="20" viewBox="0 0 26 20" fill="none">
                  <path d="M2 11L9 18L24 2" stroke="#fff" strokeWidth="2.6" />
                </svg>
              </CheckKey>
            </KeyboardFoot>
          </Keyboard>
          <StepNumber $left={50} $top={672}>3.</StepNumber>
        </ReportPanel>
      </TopRow>
      <BottomRow>
        <StrayRule />
        <NotifyPanel>
          <NotifyBody>
            <NotifyHead>
              <NotifyBadge>
                <Logo width={18} height={18} ink="#757575" paper="#fff" />
              </NotifyBadge>
              Give a Tip • now
              <NotifyCaret width="11" height="7" viewBox="0 0 11 7" fill="none">
                <path d="M1 1L5.5 5.5L10 1" stroke="#757575" strokeWidth="1.4" />
              </NotifyCaret>
            </NotifyHead>
            <NotifyTitle>There is an issue near you!</NotifyTitle>
            <NotifyText>Can you confirm that: der er et cykelhjul låst fast til en lygte..</NotifyText>
          </NotifyBody>
          <NotifyActions>
            <NotifyAction $width={114}>CONFIRM</NotifyAction>
            <NotifyAction $width={81}>DENY</NotifyAction>
            <NotifyAction $width={100}>COMMENT</NotifyAction>
          </NotifyActions>
          <MapOverhang>
            <CampusMap />
          </MapOverhang>
          <StepNumber $left={47} $top={610}>4.</StepNumber>
          <Fab $left={430} $top={729} $size={70}>
            <PlusIcon size={28} weight={3.5} color="#fff" />
          </Fab>
        </NotifyPanel>
        <ColumnRule />
        <TipGutter />
        <TipPanel>
          <AppBar>
            <MenuLines />
            <AppTitle>Give a tip</AppTitle>
            <Kebab>
              <KebabDot $color="#fff" />
              <KebabDot $color="#fff" />
              <KebabDot $color="#fff" />
            </Kebab>
          </AppBar>
          <TipMap />
          <TipBar>sjovt så mange rapporter der er ved sdu...</TipBar>
          <CommentArea>
            <VoteColumn>
              <ChevronIcon up color={PINK} />
              <VoteCount>3</VoteCount>
              <ChevronIcon color="#000" />
            </VoteColumn>
            <CommentRow>
              <CommentIcon>
                <Balloon />
              </CommentIcon>
              <CommentField>
                <CommentLabel>Comment</CommentLabel>
                <CommentText>correct, many of them</CommentText>
              </CommentField>
              <SendIcon>
                <SendArrow />
              </SendIcon>
            </CommentRow>
          </CommentArea>
          <StepNumber $left={43} $top={593}>5.</StepNumber>
          <Fab $left={450} $top={360} $size={88}>
            <PlusIcon size={32} weight={4} color="#fff" />
          </Fab>
        </TipPanel>
      </BottomRow>
    </Page>
  )
}
